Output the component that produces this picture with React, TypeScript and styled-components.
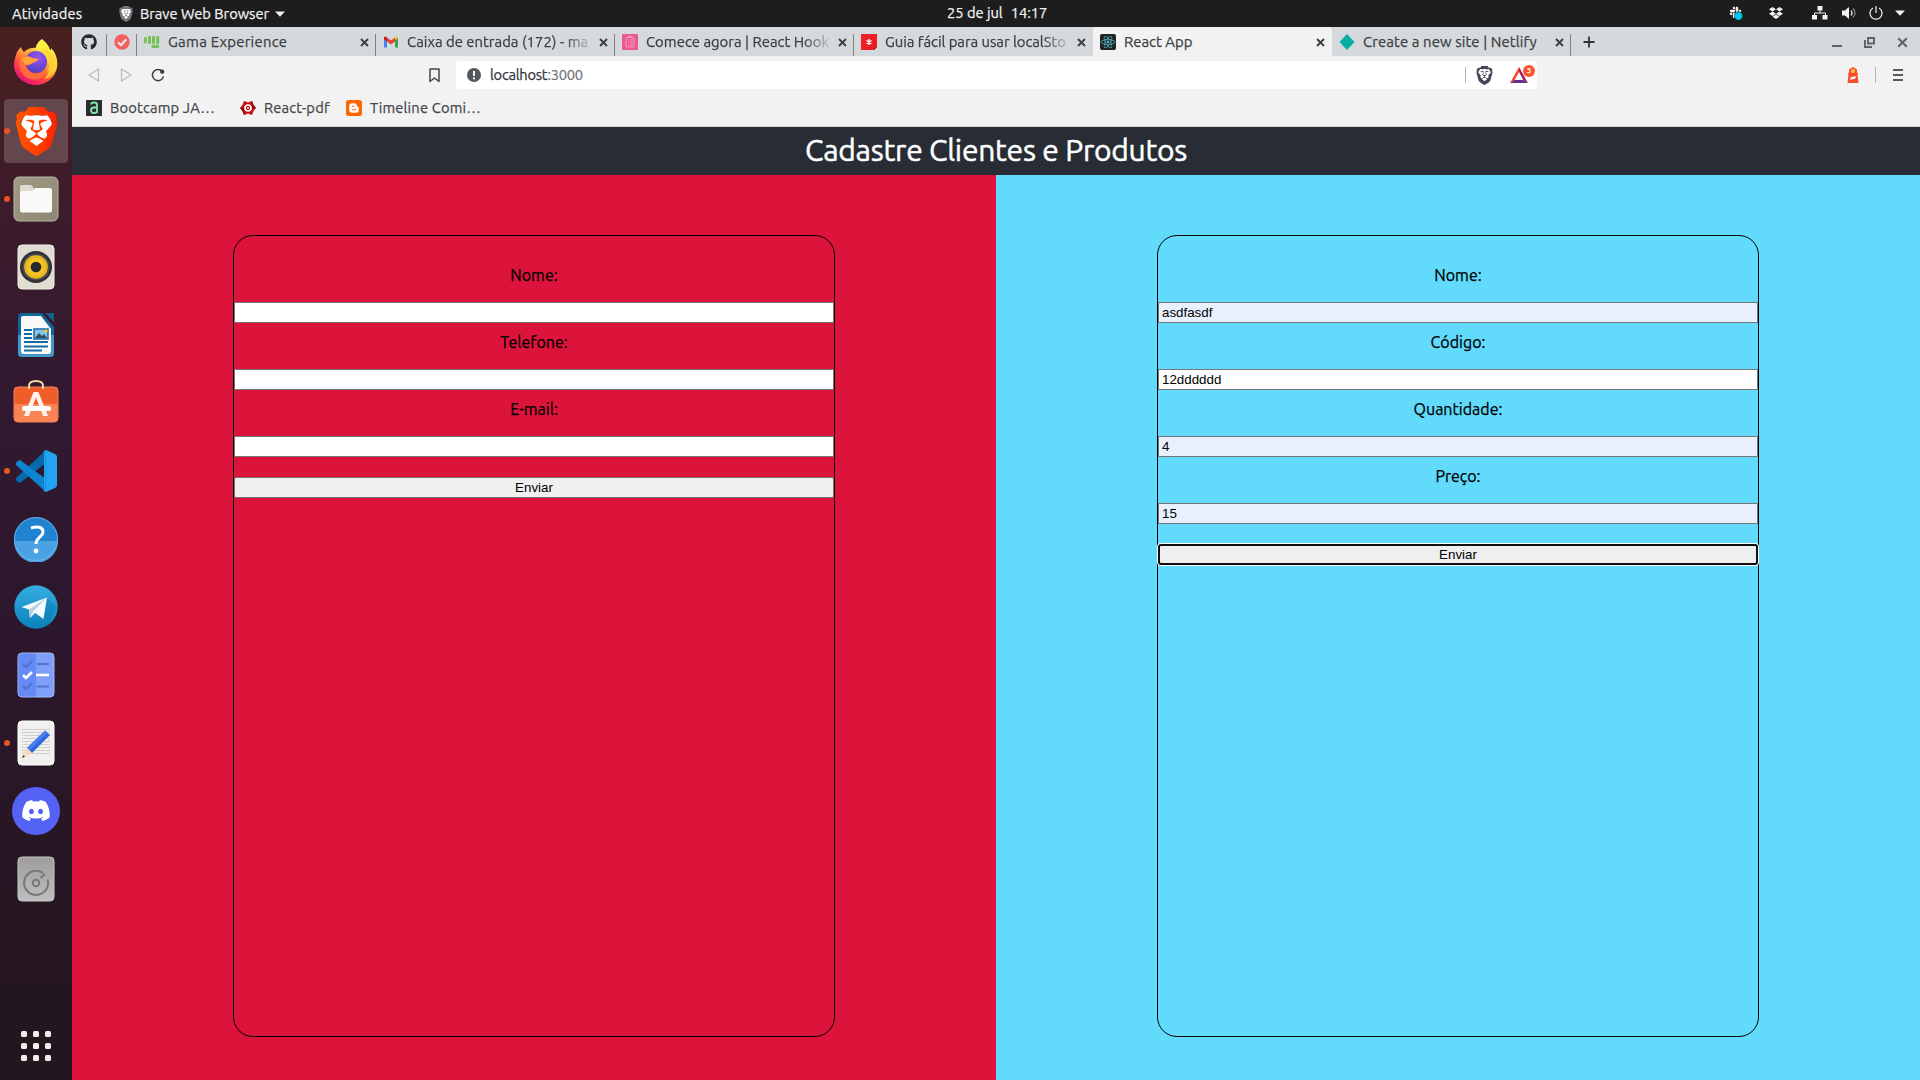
import React from 'react';
import styled, { createGlobalStyle, css } from 'styled-components';
import { FaGithub, FaDiscord, FaDropbox, FaSlack, FaReact, FaBloggerB } from 'react-icons/fa';
import { SiBrave } from 'react-icons/si';

const UI = `Ubuntu, "Noto Sans", sans-serif`;

const GlobalStyle = createGlobalStyle`
  *, *::before, *::after { box-sizing: border-box; }
  body { margin: 0; font-family: ${UI}; overflow: hidden; }
  svg { display: block; flex: none; }
`;

const Desktop = styled.div`
  display: flex;
  flex-direction: column;
  width: 1920px;
  height: 1080px;
  overflow: hidden;
  -webkit-text-stroke: 0.25px currentColor;
`;

const SystemBar = styled.header`
  display: grid;
  grid-template-columns: 947px 1fr auto;
  flex: none;
  height: 27px;
  background: #1d1d1d;
  color: #f2f2f2;
  font-size: 14.67px;
  line-height: 27px;
  white-space: pre;
`;

const SystemMenu = styled.div`
  display: flex;
  align-items: center;
  padding-left: 12px;
`;

const Activities = styled.span`
  width: 106px;
  letter-spacing: 0.15px;
`;

const AppMenu = styled.span`
  display: flex;
  align-items: center;
  gap: 6px;
`;

const Clock = styled.div`
  display: flex;
  gap: 8px;
  height: 26px;
  line-height: 26px;
`;

const Tray = styled.div`
  display: flex;
  align-items: center;
  justify-content: flex-end;
  padding-right: 15px;
  height: 26px;
`;

const TraySlot = styled.span<{ $w: number }>`
  display: flex;
  justify-content: center;
  width: ${(p) => p.$w}px;
`;

const Workspace = styled.div`
  display: flex;
  flex: 1;
  min-height: 0;
`;

const Dock = styled.nav`
  display: flex;
  flex-direction: column;
  align-items: center;
  flex: none;
  width: 72px;
  padding: 4px 0 19px;
  background: linear-gradient(#48201f 0%, #3d1c2b 17%, #321930 33%, #2d172d 56%, #24161f 92%, #23161e 100%);
`;

const DockItem = styled.div<{ $active?: boolean; $lift?: number }>`
  position: relative;
  display: grid;
  place-items: center;
  width: 64px;
  height: 64px;
  margin-bottom: 4px;
  padding-bottom: ${(p) => p.$lift ?? 0}px;
  border-radius: 4px;
  ${(p) => p.$active && css`background: #64464d;`}
`;

const RunningDot = styled.i`
  position: absolute;
  left: 0;
  top: 29px;
  width: 6px;
  height: 6px;
  border-radius: 50%;
  background: #e95420;
`;

const AppGrid = styled.div`
  display: grid;
  grid-template-columns: repeat(3, 6px);
  gap: 6px;
  margin-top: auto;
`;

const GridDot = styled.i`
  width: 6px;
  height: 6px;
  border-radius: 1.5px;
  background: #f2f0ec;
`;

const Browser = styled.main`
  display: flex;
  flex-direction: column;
  flex: 1;
  background: #f2f2f2;
`;

const TabStrip = styled.div`
  display: flex;
  flex: none;
  height: 29px;
  background: #d5d9dc;
`;

const Tab = styled.div<{ $w: number; $active?: boolean; $edge?: boolean }>`
  display: flex;
  align-items: center;
  width: ${(p) => p.$w}px;
  padding: 1px 7px 0 7px;
  color: #3c4043;
  font-size: 14.9px;
  border-radius: ${(p) => (p.$active ? '4px 4px 0 0' : '0')};
  background: ${(p) =>
    p.$active
      ? '#f2f2f2'
      : p.$edge
        ? 'linear-gradient(#7d8183, #7d8183) right bottom / 1px 22px no-repeat'
        : 'transparent'};
`;

const PinnedTab = styled(Tab)`
  padding: 1px 1px 0 0;
  justify-content: center;
`;

const TabTitle = styled.span<{ $fade?: boolean; $tracking: number }>`
  flex: 1;
  margin: 0 5px 0 8px;
  white-space: nowrap;
  line-height: 22px;
  letter-spacing: ${(p) => p.$tracking}px;
  ${(p) => p.$fade && css`mask-image: linear-gradient(90deg, #000 84%, transparent 100%);`}
`;

const NewTab = styled.div`
  display: grid;
  place-items: center;
  width: 36px;
  padding-top: 1px;
`;

const WindowButtons = styled.div`
  display: flex;
  align-items: center;
  gap: 22px;
  margin-left: auto;
  padding: 1px 12px 0 0;
`;

const Toolbar = styled.div`
  display: flex;
  align-items: center;
  flex: none;
  height: 38px;
  padding: 0 15px 0 15px;
`;

const NavButtons = styled.div`
  display: flex;
  align-items: center;
  gap: 18px;
  width: 333px;
`;

const BookmarkButton = styled.div`
  display: flex;
  justify-content: center;
  width: 28px;
  margin-right: 8px;
`;

const AddressBar = styled.div`
  display: flex;
  align-items: center;
  width: 1081px;
  height: 28px;
  padding: 0 2px 0 11px;
  border-radius: 4px;
  background: #fff;
`;

const Address = styled.span`
  flex: 1;
  margin: -1px 0 0 9px;
  color: #33363a;
  font-size: 14.67px;
  letter-spacing: -0.25px;
`;

const Port = styled.span`
  color: #74777a;
`;

const Divider = styled.i<{ $gap: number }>`
  width: 1px;
  height: 16px;
  margin-right: ${(p) => p.$gap}px;
  background: #b4b6b8;
`;

const Rewards = styled.div`
  position: relative;
  width: 31px;
  height: 22px;
  margin-left: 10px;
  padding: 3px 0 0 6px;
`;

const Badge = styled.span`
  position: absolute;
  top: 1px;
  right: 0;
  width: 12px;
  height: 12px;
  border-radius: 50%;
  background: #fb542b;
  color: #fff;
  font-size: 8px;
  line-height: 12px;
  text-align: center;
`;

const ToolbarEnd = styled.div`
  display: flex;
  align-items: center;
  gap: 16px;
  margin-left: auto;
`;

const MenuLines = styled.div`
  display: grid;
  gap: 3px;
  margin-right: 2px;
`;

const MenuLine = styled.i`
  width: 10px;
  height: 2px;
  background: #555759;
`;

const Bookmarks = styled.div`
  display: flex;
  flex: none;
  height: 33px;
  padding: 6px 0 0 14px;
  border-bottom: 1px solid #cfd4d4;
`;

const Bookmark = styled.div<{ $w: number }>`
  display: flex;
  align-items: center;
  gap: 8px;
  width: ${(p) => p.$w}px;
  height: 16px;
  color: #44474b;
  font-size: 14.67px;
  letter-spacing: 0.2px;
  white-space: nowrap;
`;

const BookmarkTitle = styled.span`
  margin-top: -2px;
`;

const PageHeader = styled.h1`
  flex: none;
  height: 48px;
  margin: 0;
  background: #282c34;
  color: #fff;
  font-size: 30px;
  font-weight: 400;
  letter-spacing: -0.25px;
  line-height: 47px;
  text-align: center;
  -webkit-text-stroke-width: 0.5px;
`;

const Panels = styled.div`
  display: grid;
  grid-template-columns: 1fr 1fr;
  flex: 1;
`;

const Panel = styled.section<{ $color: string }>`
  display: flex;
  justify-content: center;
  padding-top: 60px;
  background: ${(p) => p.$color};
`;

const Form = styled.form`
  display: flex;
  flex-direction: column;
  width: 602px;
  height: 802px;
  padding-top: 20px;
  border: 1px solid #000;
  border-radius: 20px;
`;

const Label = styled.label`
  height: 46px;
  color: #000;
  font-size: 16px;
  line-height: 39px;
  text-align: center;
`;

const Input = styled.input<{ $filled?: boolean }>`
  height: 21px;
  padding: 1px 3px;
  border: 1px solid #767676;
  border-radius: 0;
  outline: none;
  background: ${(p) => (p.$filled ? '#e8f0fe' : '#fff')};
  color: #000;
  font: 13.333px "Liberation Sans", Arial, sans-serif;
  -webkit-text-stroke-width: 0;
`;

const Submit = styled.button<{ $focused?: boolean }>`
  height: 21px;
  margin-top: 20px;
  padding: 1px 6px;
  border: 1px solid #767676;
  border-radius: 2px;
  background: #efefef;
  color: #000;
  font: 13.333px "Liberation Sans", Arial, sans-serif;
  -webkit-text-stroke-width: 0;
  ${(p) =>
    p.$focused &&
    css`
      border: 2px solid #101010;
      border-radius: 3px;
      padding: 0 6px;
      box-shadow: 0 0 0 1px #fff;
    `}
`;

const CloseIcon = ({ size = 9, color = '#3c4043', w = 1.9 }: { size?: number; color?: string; w?: number }) => (
  <svg width={size} height={size} viewBox="0 0 9 9">
    <path d="M1 1l7 7M8 1l-7 7" stroke={color} strokeWidth={w} />
  </svg>
);

const Caret = () => (
  <svg width="10" height="6" viewBox="0 0 10 6">
    <path d="M0 .5h10L5 5.8z" fill="#f2f2f2" />
  </svg>
);

const BraveShield = ({ size, fill, face }: { size: number; fill: string; face: string }) => (
  <svg width={size} height={size} viewBox="0 0 24 24">
    <defs>
      <linearGradient id="braveOrange" x1="0" x2="1">
        <stop offset="0" stopColor="#ff5500" />
        <stop offset=".5" stopColor="#ff4000" />
        <stop offset="1" stopColor="#ff2000" />
      </linearGradient>
    </defs>
    <path d="M6 4h12l1.500 4-2.500 11-5 3-5-3L4.500 8z" fill={face} />
    <SiBrave x="0" y="0" size={24} fill={fill} />
  </svg>
);

const Firefox = () => (
  <svg width="46" height="48" viewBox="0 0 46 48">
    <defs>
      <linearGradient id="ffBody" x1=".85" y1=".1" x2=".25" y2=".95">
        <stop offset="0" stopColor="#fff44f" />
        <stop offset=".35" stopColor="#ffa436" />
        <stop offset=".65" stopColor="#ff4b3e" />
        <stop offset="1" stopColor="#e5107a" />
      </linearGradient>
      <radialGradient id="ffGlobe" cx=".6" cy=".3" r=".8">
        <stop offset="0" stopColor="#9a55f5" />
        <stop offset="1" stopColor="#4b3bb8" />
      </radialGradient>
      <linearGradient id="ffTail" x1=".5" y1="0" x2=".5" y2="1">
        <stop offset="0" stopColor="#fff64a" />
        <stop offset="1" stopColor="#ffbd2f" />
      </linearGradient>
    </defs>
    <path d="M3 17C4 13 6 11 8 9c1 3 2 4 3 5 5-5 12-5 16-3l8-1c8 6 10 13 9 20-2 10-11 17-21 17C11 47 1 38 1 27c0-4 1-7 2-10z" fill="url(#ffBody)" />
    <path d="M29 1c8 7 8 10 8 13 1-1 1-2 1-4 5 5 7 12 6 18-2 8-7 12-13 13 6-5 7-14 3-20-3-3-9-5-11-9-1-5 3-9 6-11z" fill="url(#ffTail)" />
    <circle cx="23" cy="24" r="11" fill="url(#ffGlobe)" />
    <path d="M7 20c5-3 9-2 12 0l7 1c-2 3-5 3-6 4-3 2-5 3-7 2 1 8 12 12 20 5-2 8-9 11-15 9C8 39 5 29 7 20z" fill="#ff7139" opacity=".9" />
    <path d="M8 21c4-3 8-3 11-1l6 1c-1 3-4 3-6 4-3 2-5 2-7 1z" fill="#ffa436" />
    <path d="M28 12c9 3 12 15 5 22 11-4 9-17 1-21z" fill="#ffcd35" opacity=".8" />
  </svg>
);

const Files = () => (
  <svg width="46" height="46" viewBox="0 0 46 46">
    <defs>
      <linearGradient id="filesBg" x1="0" x2="1" y2="1">
        <stop offset="0" stopColor="#a09a87" />
        <stop offset="1" stopColor="#8c8673" />
      </linearGradient>
    </defs>
    <rect x="1" y="1" width="44" height="44" rx="5" fill="url(#filesBg)" stroke="#bab6a7" />
    <path d="M7 11q0-2 2-2h8q2 0 3 2l1 2h15q3 0 3 3v9H7z" fill="#dedacd" />
    <path d="M7 17q0-2 2-2h11l2-3h14.500q2.500 0 2.500 2.500V34q0 2.500-2.500 2.500h-27Q7 36.500 7 34z" fill="#f9f9f7" />
  </svg>
);

const Rhythmbox = () => (
  <svg width="38" height="46" viewBox="0 0 38 46">
    <rect x="1" y="1" width="36" height="44" rx="4" fill="#e2ddd2" stroke="#f1eee7" />
    <circle cx="19" cy="23" r="16" fill="#2e3136" />
    <circle cx="19" cy="23" r="13.600" fill="#4a4d52" />
    <circle cx="19" cy="23" r="11.800" fill="#e8b61c" />
    <circle cx="19" cy="23" r="9" fill="#f3c42a" />
    <circle cx="19" cy="23" r="5.300" fill="#26282b" />
  </svg>
);

const Writer = () => (
  <svg width="38" height="46" viewBox="0 0 38 46">
    <path d="M5 1h20l12 14v26q0 4-4 4H5q-4 0-4-4V5q0-4 4-4z" fill="#12659b" />
    <path d="M1 23h36v18q0 4-4 4H5q-4 0-4-4z" fill="#4396ca" />
    <path d="M28 1h9v9z" fill="#175f8e" />
    <path d="M6 4h18l10 13v22q0 3-3 3H7q-3 0-3-3V6q0-2 2-2z" fill="#fafafa" />
    <path d="M7 18h8M7 22h8M7 26h8M7 30h24M7 34.500h24M7 38.500h18" stroke="#156ba4" strokeWidth="1.800" />
    <path d="M17 17h14v10H17z" fill="#87c5e8" stroke="#156ba4" strokeWidth="1.500" />
    <path d="M18 26l4-5 3 3 2-2 3 4z" fill="#374a58" />
    <circle cx="29" cy="19" r="1.700" fill="#f5c518" />
  </svg>
);

const Software = () => (
  <svg width="46" height="44" viewBox="0 0 46 44">
    <rect x="1" y="8" width="44" height="35" rx="4" fill="#f15c2b" stroke="#f78860" />
    <path d="M1.500 25h43v14q0 4-4 4h-35q-4 0-4-4z" fill="#fb8455" />
    <path d="M16 10V7q0-5 7-5t7 5v3" fill="none" stroke="#f3d9a6" strokeWidth="2" />
    <path d="M11 37l9.500-24h5L35 37h-5l-7-18.500L16 37z" fill="#fff1ea" />
    <rect x="9" y="27" width="29" height="5" rx="2.500" fill="#fff" />
  </svg>
);

const Code = () => (
  <svg width="44" height="44" viewBox="0 0 44 44">
    <path d="M32 1v13L6 34q-2 0-4-3v-2z" fill="#0669ac" />
    <path d="M32 43V30L6 11q-2 0-4 3v2z" fill="#0c84d0" />
    <path d="M32 1l9 4q2 1 2 3v28q0 2-2 3l-9 4-2-1V2z" fill="#23a4f2" />
    <path d="M32 1v42l-3-2 2-2V5l-2-2z" fill="#1c93e2" />
  </svg>
);

const Help = () => (
  <svg width="46" height="46" viewBox="0 0 46 46">
    <circle cx="23" cy="23" r="22" fill="#1f83d2" />
    <path d="M1 25a22 22 0 0 0 44 0z" fill="#4ba2e2" />
    <circle cx="23" cy="23" r="21.500" fill="none" stroke="#79b9ea" strokeWidth=".800" />
    <path d="M18 12q12-3 12 4c0 5-7 5-7 12" fill="none" stroke="#fff" strokeWidth="3" />
    <circle cx="23" cy="35" r="2.400" fill="#fff" />
  </svg>
);

const Telegram = () => (
  <svg width="44" height="44" viewBox="0 0 44 44">
    <defs>
      <linearGradient id="tgBg" x2="0" y2="1">
        <stop offset="0" stopColor="#36aee2" />
        <stop offset="1" stopColor="#0a81ba" />
      </linearGradient>
    </defs>
    <circle cx="22" cy="22" r="21.700" fill="url(#tgBg)" />
    <path d="M32 12l10 9q-1 8-8 15L22 29z" fill="#067aaf" opacity=".45" />
    <path d="M7.500 22L33 12.500 29.500 34 21 28l-5 5-1-8.500z" fill="#f4fafd" />
    <path d="M15 24.500L33 12.500 19 26.500 16 33z" fill="#b5cfe4" />
  </svg>
);

const Todo = () => (
  <svg width="38" height="46" viewBox="0 0 38 46">
    <rect x="1" y="1" width="36" height="44" rx="4" fill="#7f9ffa" stroke="#a6bdfc" />
    <path d="M19 1.500H5Q1.500 1.500 1.500 5v36q0 3.500 3.500 3.500h14z" fill="#658af6" />
    <g fill="none" strokeWidth="2.200">
      <path d="M6 12l3 3 6-6M20 12h12M6 34l3 3 6-6M20 34.500h12" stroke="#5573c5" />
      <path d="M6 23l3 3 6-6M19 23h13" stroke="#fff" strokeWidth="2.500" />
    </g>
  </svg>
);

const TextEditor = () => (
  <svg width="38" height="46" viewBox="0 0 38 46">
    <rect x="1" y="1" width="36" height="44" rx="4" fill="#f0f0ef" stroke="#fff" />
    <path d="M5 9.500h28M5 12.500h28M5 15.500h28M5 18.500h28M5 21.500h28M5 24.500h28M5 27.500h28M5 30.500h28M5 33.500h28" stroke="#cfcfcf" />
    <path d="M28 10.500l5 4.500-18 18-5-5z" fill="#2f65de" />
    <path d="M28 10.500l2.500 2.300-18 17.700L10 28z" fill="#4a7ef0" />
    <path d="M10 28l5 5-10 5z" fill="#f7d7b5" />
    <path d="M6.300 35l1.700 1.700L5 38z" fill="#333" />
  </svg>
);

const Discord = () => (
  <svg width="48" height="48" viewBox="0 0 48 48">
    <circle cx="24" cy="24" r="24" fill="#5562f6" />
    <FaDiscord x={9} y={8.5} size={30} fill="#fff" />
  </svg>
);

const Disks = () => (
  <svg width="38" height="46" viewBox="0 0 38 46">
    <defs>
      <linearGradient id="diskBg" x2="0" y2="1">
        <stop offset="0" stopColor="#9d9d9d" />
        <stop offset="1" stopColor="#bfbfbf" />
      </linearGradient>
    </defs>
    <rect x="1" y="1" width="36" height="44" rx="4" fill="url(#diskBg)" stroke="#c9c9c9" />
    <path d="M26 17.100a12 12 0 1 0 4.600 6.400" fill="none" stroke="#777" strokeWidth="2" />
    <path d="M23.500 22l4.500-4" stroke="#777" strokeWidth="2" />
    <circle cx="19" cy="27" r="3.200" fill="none" stroke="#777" strokeWidth="2" />
  </svg>
);

const dockApps: { icon: React.ReactNode; running?: boolean; active?: boolean; lift?: number }[] = [
  { icon: <Firefox />, lift: 2 },
  { icon: <BraveShield size={49} fill="url(#braveOrange)" face="#fff" />, running: true, active: true },
  { icon: <Files />, running: true },
  { icon: <Rhythmbox /> },
  { icon: <Writer /> },
  { icon: <Software />, lift: 5 },
  { icon: <Code />, running: true },
  { icon: <Help />, lift: 1 },
  { icon: <Telegram /> },
  { icon: <Todo /> },
  { icon: <TextEditor />, running: true },
  { icon: <Discord /> },
  { icon: <Disks /> },
];

const CheckFavicon = () => (
  <svg width="16" height="16" viewBox="0 0 16 16">
    <circle cx="8" cy="8" r="7.700" fill="#f1605d" />
    <path d="M4 8.300l3 2.900 5.300-6" fill="none" stroke="#e6e6e6" strokeWidth="2.200" />
  </svg>
);

const GamaFavicon = () => (
  <svg width="16" height="16" viewBox="0 0 16 16" fill="#75c158">
    <rect x="0" y="3" width="2.800" height="6.500" rx="1" />
    <rect x="4" y="2" width="3" height="8" rx="1" />
    <rect x="8" y="2" width="3" height="8" rx="1" />
    <rect x="12.200" y="2" width="3" height="8" rx="1" />
    <rect x="7.500" y="10.800" width="7.700" height="3.200" rx="1" />
  </svg>
);

const GmailFavicon = () => (
  <svg width="16" height="16" viewBox="0 0 16 16">
    <path d="M1 4v9.500h3V6z" fill="#4285f4" />
    <path d="M15 4v9.500h-3V6z" fill="#34a853" />
    <path d="M12 6l3-2q0-2-1.500-1.500L12 3.500z" fill="#fbbc04" />
    <path d="M4 3.500l4 3 4-3V7.500l-4 3-4-3z" fill="#ea4335" />
    <path d="M4 3.500L2.500 2.500Q1 2 1 4v1.500l3 2z" fill="#c5221f" />
  </svg>
);

const HookFormFavicon = () => (
  <svg width="16" height="16" viewBox="0 0 16 16">
    <rect width="16" height="16" rx="1" fill="#ec5990" />
    <g fill="none" stroke="#f79cbf" strokeWidth="1">
      <rect x="4" y="3.500" width="8" height="9.500" rx="1" />
      <path d="M6 2.500h4M6 6h1M8 6h3M6 8.500h1M8 8.500h3M6 11h1M8 11h3" />
    </g>
  </svg>
);

const StarFavicon = () => (
  <svg width="16" height="16" viewBox="0 0 16 16">
    <path d="M0 0h16v13l-3 3H0z" fill="#ec2024" />
    <path d="M13 16l.500-2.500L16 13z" fill="#5d1a1a" />
    <path d="M8 5v6M5.400 6.500l5.200 3M10.600 6.500l-5.200 3" stroke="#fff" strokeWidth="1.300" />
  </svg>
);

const ReactFavicon = () => (
  <svg width="16" height="16" viewBox="0 0 16 16">
    <rect width="16" height="16" rx="2" fill="#222" />
    <FaReact x={1} y={1} size={14} fill="#53bdd8" />
  </svg>
);

const NetlifyFavicon = () => (
  <svg width="16" height="16" viewBox="0 0 16 16">
    <path d="M8 0l7.500 8L8 16 .500 8z" fill="#07ada1" />
  </svg>
);

const AlgaFavicon = () => (
  <svg width="16" height="16" viewBox="0 0 16 16">
    <rect width="16" height="16" fill="#2a2e33" />
    <path d="M5 4.500q0-2 3-2t3 2V13M11 7.500H8q-3 0-3 2.700T8 13t3-3" fill="none" stroke="#86e8a4" strokeWidth="1.800" />
  </svg>
);

const ReactPdfFavicon = () => (
  <svg width="16" height="16" viewBox="0 0 16 16">
    <path d="M4 1l4 1.500L12 1l1.500 4L16 8l-2.500 3L12 15l-4-1.500L4 15l-1.500-4L0 8l2.500-3z" fill="#c40d10" />
    <path d="M12 1l1.500 4L16 8h-4zM4 15l-1.500-4L0 8h4z" fill="#7e0a0c" />
    <circle cx="8" cy="8" r="3" fill="#c40d10" stroke="#fff" strokeWidth="1.600" />
    <circle cx="8" cy="8" r="1" fill="#fff" />
  </svg>
);

const BloggerFavicon = () => (
  <svg width="16" height="16" viewBox="0 0 16 16">
    <rect width="16" height="16" rx="2.500" fill="#ff6600" />
    <FaBloggerB x={2.5} y={2.5} size={11} fill="#fff" />
  </svg>
);

const tabs = [
  { title: 'Gama Experience', icon: <GamaFavicon />, edge: true, tracking: 0.25 },
  { title: 'Caixa de entrada (172) - ma', icon: <GmailFavicon />, edge: true, fade: true, tracking: 0 },
  { title: 'Comece agora | React Hook', icon: <HookFormFavicon />, edge: true, fade: true, tracking: 0 },
  { title: 'Guia fácil para usar localSto', icon: <StarFavicon />, fade: true, tracking: -0.05 },
  { title: 'React App', icon: <ReactFavicon />, active: true, tracking: 0 },
  { title: 'Create a new site | Netlify', icon: <NetlifyFavicon />, edge: true, tracking: 0.1 },
];

type Field = { label: string; value?: string; filled?: boolean };

const clientFields: Field[] = [{ label: 'Nome:' }, { label: 'Telefone:' }, { label: 'E-mail:' }];

const productFields: Field[] = [
  { label: 'Nome:', value: 'asdfasdf', filled: true },
  { label: 'Código:', value: '12dddddd' },
  { label: 'Quantidade:', value: '4', filled: true },
  { label: 'Preço:', value: '15', filled: true },
];

const FormCard = ({ fields, focused }: { fields: Field[]; focused?: boolean }) => (
  <Form>
    {fields.map((f) => (
      <React.Fragment key={f.label}>
        <Label>{f.label}</Label>
        <Input defaultValue={f.value} $filled={f.filled} />
      </React.Fragment>
    ))}
    <Submit type="button" $focused={focused}>
      Enviar
    </Submit>
  </Form>
);

export default function App() {
  return (
    <Desktop>
      <GlobalStyle />
      <SystemBar>
        <SystemMenu>
          <Activities>Atividades</Activities>
          <AppMenu>
            <BraveShield size={16} fill="#77797b" face="#fff" />
            <span>Brave Web Browser</span>
            <Caret />
          </AppMenu>
        </SystemMenu>
        <Clock>
          <span>25 de jul</span>
          <span>14:17</span>
        </Clock>
        <Tray>
          <TraySlot $w={34}>
            <svg width="16" height="16" viewBox="0 0 16 16">
              <FaSlack x={1} y={1} size={13} fill="#f2f2f2" />
              <circle cx="10.500" cy="11" r="4.200" fill="#00c8f5" stroke="#1d1d1d" strokeWidth=".600" />
            </svg>
          </TraySlot>
          <TraySlot $w={46}>
            <FaDropbox size={14} color="#f2f2f2" />
          </TraySlot>
          <TraySlot $w={42}>
            <svg width="16" height="14" viewBox="0 0 16 14" fill="#f2f2f2">
              <path d="M5.500 0h5v4.500h-5zM0 9h5v4.500H0zM10.500 9h5v4.500h-5z" />
              <path d="M8 4v3M2.500 9.500V7h11v2.500" fill="none" stroke="#f2f2f2" />
            </svg>
          </TraySlot>
          <TraySlot $w={16}>
            <svg width="15" height="14" viewBox="0 0 15 14">
              <path d="M0 4.500h3L7 1v12L3 9.500H0z" fill="#f2f2f2" />
              <path d="M9 4.500q2 2.500 0 5" fill="none" stroke="#f2f2f2" strokeWidth="1.200" />
              <path d="M11 2.500q4 4.500 0 9" fill="none" stroke="#888" strokeWidth="1.200" />
            </svg>
          </TraySlot>
          <TraySlot $w={38}>
            <svg width="14" height="14" viewBox="0 0 14 14">
              <path d="M4 2A6 6 0 1 0 10 2M7 0v7" fill="none" stroke="#f2f2f2" strokeWidth="1.200" />
            </svg>
          </TraySlot>
          <Caret />
        </Tray>
      </SystemBar>
      <Workspace>
        <Dock>
          {dockApps.map((app, i) => (
            <DockItem key={i} $active={app.active} $lift={app.lift}>
              {app.running && <RunningDot />}
              {app.icon}
            </DockItem>
          ))}
          <AppGrid>
            {Array.from({ length: 9 }, (_, i) => (
              <GridDot key={i} />
            ))}
          </AppGrid>
        </Dock>
        <Browser>
          <TabStrip>
            <PinnedTab $w={35} $edge>
              <FaGithub size={16} color="#24292e" />
            </PinnedTab>
            <PinnedTab $w={30} $edge>
              <CheckFavicon />
            </PinnedTab>
            {tabs.map((t) => (
              <Tab key={t.title} $w={239} $active={t.active} $edge={t.edge}>
                {t.icon}
                <TabTitle $fade={t.fade} $tracking={t.tracking}>
                  {t.title}
                </TabTitle>
                <CloseIcon />
              </Tab>
            ))}
            <NewTab>
              <svg width="12" height="12" viewBox="0 0 12 12">
                <path d="M6 .500v11M.500 6h11" stroke="#303336" strokeWidth="1.800" />
              </svg>
            </NewTab>
            <WindowButtons>
              <svg width="10" height="10" viewBox="0 0 10 10">
                <path d="M0 9h10" stroke="#5f6366" strokeWidth="2" />
              </svg>
              <svg width="11" height="11" viewBox="0 0 11 11">
                <path d="M4 1h6v5.500H4zM1 3v7h7" fill="none" stroke="#5f6366" strokeWidth="1.900" />
              </svg>
              <CloseIcon size={11} color="#5f6366" w={1.7} />
            </WindowButtons>
          </TabStrip>
          <Toolbar>
            <NavButtons>
              <svg width="14" height="14" viewBox="0 0 14 14">
                <path d="M11.500 1v12L2 7z" fill="none" stroke="#b9bbbd" strokeWidth="1.300" strokeLinejoin="round" />
              </svg>
              <svg width="14" height="14" viewBox="0 0 14 14">
                <path d="M2.500 1v12L12 7z" fill="none" stroke="#b9bbbd" strokeWidth="1.300" strokeLinejoin="round" />
              </svg>
              <svg width="14" height="14" viewBox="0 0 15 15">
                <path d="M12 3.500A6 6 0 1 0 13.400 9" fill="none" stroke="#3b3e41" strokeWidth="1.600" />
                <circle cx="12" cy="4" r="2.300" fill="#3b3e41" />
              </svg>
            </NavButtons>
            <BookmarkButton>
              <svg width="11" height="15" viewBox="0 0 11 15">
                <path d="M1 1h9v12.500L5.500 10 1 13.500z" fill="none" stroke="#45484b" strokeWidth="1.500" strokeLinejoin="round" />
              </svg>
            </BookmarkButton>
            <AddressBar>
              <svg width="14" height="14" viewBox="0 0 14 14">
                <circle cx="7" cy="7" r="7" fill="#55585b" />
                <path d="M7 3v5M7 9.500v1.800" stroke="#fff" strokeWidth="1.900" />
              </svg>
              <Address>
                localhost<Port>:3000</Port>
              </Address>
              <Divider $gap={9} />
              <BraveShield size={19} fill="#434656" face="#fff" />
              <Rewards>
                <svg width="18" height="16" viewBox="0 0 18 16">
                  <path d="M9 0L0 16l4.500-2.700L9 5z" fill="#ff4724" />
                  <path d="M9 0l9 16-4.500-2.700L9 5z" fill="#9e1f63" />
                  <path d="M0 16h18l-4.500-2.900h-9z" fill="#662d91" />
                </svg>
                <Badge>5</Badge>
              </Rewards>
            </AddressBar>
            <ToolbarEnd>
              <svg width="12" height="16" viewBox="0 0 12 16">
                <path d="M6 0l4 2.500V6H2V2.500zM1 6h10v1.500h-.500L11.500 16H.500L1.500 7.500H1z" fill="#f4502a" />
                <circle cx="6" cy="4" r="2" fill="#ffc94d" />
                <path d="M3.500 10.500L8.500 9v2.500L3.200 13z" fill="#fff" />
              </svg>
              <Divider $gap={1} />
              <MenuLines>
                <MenuLine />
                <MenuLine />
                <MenuLine />
              </MenuLines>
            </ToolbarEnd>
          </Toolbar>
          <Bookmarks>
            <Bookmark $w={154}>
              <AlgaFavicon />
              <BookmarkTitle>Bootcamp JA…</BookmarkTitle>
            </Bookmark>
            <Bookmark $w={106}>
              <ReactPdfFavicon />
              <BookmarkTitle>React-pdf</BookmarkTitle>
            </Bookmark>
            <Bookmark $w={160}>
              <BloggerFavicon />
              <BookmarkTitle>Timeline Comi…</BookmarkTitle>
            </Bookmark>
          </Bookmarks>
          <PageHeader>Cadastre Clientes e Produtos</PageHeader>
          <Panels>
            <Panel $color="#dc143c">
              <FormCard fields={clientFields} />
            </Panel>
            <Panel $color="#61dafb">
              <FormCard fields={productFields} focused />
            </Panel>
          </Panels>
        </Browser>
      </Workspace>
    </Desktop>
  );
}
